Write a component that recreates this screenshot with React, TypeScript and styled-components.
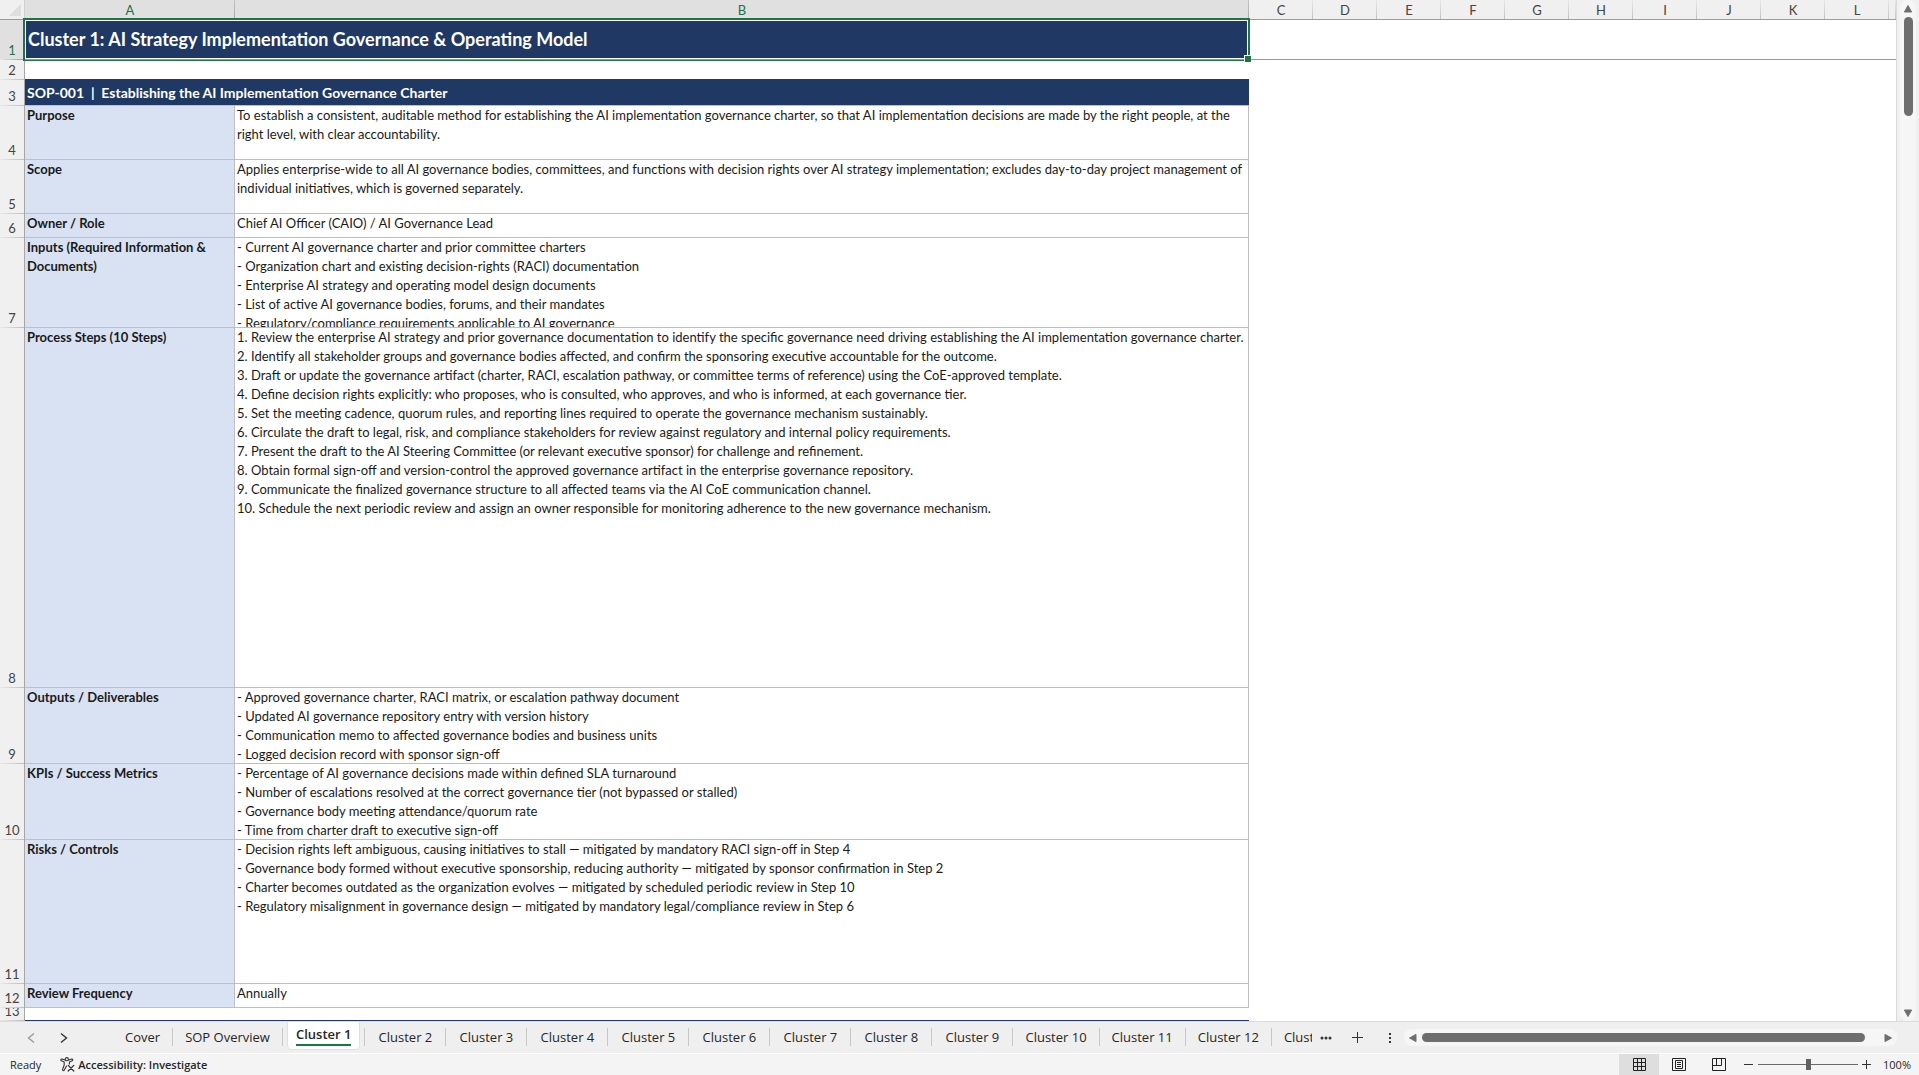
import React, { useState } from 'react';
import styled, { createGlobalStyle } from 'styled-components';

const GREEN = '#217346';
const NAVY = '#203864';
const GRID = '#bfbfbf';
const CHROME = '#f0f0f0';
const INK = '#262626';

const GlobalStyle = createGlobalStyle`
  * { box-sizing: border-box; }
  body { margin: 0; background: ${CHROME}; }
  button { border: 0; padding: 0; margin: 0; background: none; color: inherit; font: inherit; }
`;

const Workbook = styled.div`
  display: flex;
  flex-direction: column;
  height: 100vh;
  overflow: hidden;
  background: ${CHROME};
  color: ${INK};
  font-family: "Open Sans", "Noto Sans", sans-serif;
`;

const SheetArea = styled.main`
  display: flex;
  flex: 1;
  min-height: 0;
`;

const SheetView = styled.div`
  flex: 1;
  min-width: 0;
  overflow: hidden;
  background: #fff;
  border-right: 1px solid #dadada;
`;

const Sheet = styled.table`
  width: 100%;
  table-layout: fixed;
  border-collapse: separate;
  border-spacing: 0;
  font: 13px/19px Lato, Roboto, sans-serif;
  color: #1a1a1a;

  th, td { padding: 0; text-align: left; vertical-align: top; font-weight: 400; }
`;

const Col = styled.col<{ $w?: number }>`
  width: ${p => (p.$w ? `${p.$w}px` : 'auto')};
`;

const Corner = styled.td`
  height: 20px;
  background: ${CHROME};
  border-right: 1px solid #d0d0d0;
  border-bottom: 1px solid #9c9c9c;
`;

const CornerMark = styled.svg`
  display: block;
  margin: 4px 0 0 9px;
`;

const ColHeader = styled.th<{ $selected?: boolean }>`
  && {
    height: 20px;
    padding-top: 2px;
    line-height: 17px;
    text-align: center;
    border-bottom: 1px solid #9c9c9c;
    color: ${p => (p.$selected ? GREEN : '#444')};
    background: ${p => `linear-gradient(${p.$selected ? '#c4c4c4, #a8a8a8' : '#e8e8e8, #c4c4c4'}) right / 1px 100% no-repeat,
      ${p.$selected ? '#e0e0e0' : CHROME}`};
  }
`;

const RowHeader = styled.th<{ $selected?: boolean }>`
  border-right: 1px solid #a6a6a6;
  color: ${p => (p.$selected ? GREEN : '#444')};
  background: ${p => `linear-gradient(to right, #e8e8e8, ${p.$selected ? '#999' : '#bdbdbd'}) bottom / 100% 1px no-repeat,
    ${p.$selected ? '#e0e0e0' : CHROME}`};
`;

const RowNumber = styled.div<{ $h: number }>`
  display: flex;
  align-items: flex-end;
  justify-content: center;
  height: ${p => p.$h}px;
  padding-bottom: 2px;
  line-height: 16px;
  overflow: hidden;
`;

const Cell = styled.td<{ $line?: string; $edge?: boolean }>`
  border-bottom: 1px solid ${p => p.$line ?? 'transparent'};
  border-right: ${p => (p.$edge ? `1px solid ${GRID}` : '0')};
`;

const LabelCell = styled.th`
  && {
    background: #d9e2f3;
    border-right: 1px solid ${GRID};
    border-bottom: 1px solid ${GRID};
    font-weight: 700;
  }
`;

const CellText = styled.div<{ $h: number }>`
  height: ${p => p.$h - 1}px;
  padding-left: 2px;
  overflow: hidden;
  white-space: pre-line;
`;

const TitleCell = styled.td`
  position: relative;
  border-bottom: 1px solid #999;
`;

const Title = styled.div`
  display: flex;
  align-items: center;
  height: 39px;
  margin-right: 1px;
  padding-left: 2px;
  border: 1px solid #fff;
  background: ${NAVY};
  color: #fff;
  font-weight: 700;
  font-size: 18px;
`;

const Selection = styled.div`
  position: absolute;
  inset: -2px -1px -2px -2px;
  border: 2px solid ${GREEN};
  border-bottom-width: 1px;
  pointer-events: none;

  &::after {
    content: '';
    position: absolute;
    right: -3px;
    bottom: -2px;
    width: 6px;
    height: 6px;
    background: ${GREEN};
    border: solid #fff;
    border-width: 1px 0 0 1px;
  }
`;

const SectionCell = styled.td`
  background: ${NAVY};
  border-bottom: 1px solid ${GRID};
`;

const Section = styled.div`
  display: flex;
  align-items: center;
  height: 25px;
  padding-left: 2px;
  color: #fff;
  font-weight: 700;
  font-size: 14px;
  white-space: pre;
`;

const ScrollButton = styled.button`
  display: flex;
  align-items: center;
  justify-content: center;
  flex: none;
`;

const VScroll = styled.div`
  display: flex;
  flex-direction: column;
  align-items: center;
  width: 16px;
  margin: 0 3px;
  border-radius: 8px;
  background: #f6f6f6;

  ${ScrollButton} { width: 16px; height: 17px; }
`;

const VTrack = styled.div`
  flex: 1;
  width: 9px;
`;

const VThumb = styled.div`
  height: 10%;
  border-radius: 5px;
  background: #6e6e6e;
`;

const TabBar = styled.nav`
  display: flex;
  align-items: center;
  height: 32px;
  flex: none;
  padding-right: 22px;
  border-top: 1px solid #dcdcdc;
  background: #efefef;
  font-size: 13px;
`;

const TabNav = styled.div`
  display: flex;
  flex: none;
  width: 113px;
  padding-left: 14px;
`;

const NavButton = styled.button<{ $dim?: boolean }>`
  display: flex;
  justify-content: center;
  width: 33px;
  color: ${p => (p.$dim ? '#9a9a9a' : '#333')};
`;

const TabList = styled.div`
  display: flex;
  align-self: stretch;
  flex: none;
`;

const Tab = styled.button<{ $active: boolean; $clipped?: boolean }>`
  position: relative;
  display: flex;
  align-items: ${p => (p.$active ? 'flex-start' : 'center')};
  justify-content: ${p => (p.$clipped ? 'flex-start' : 'center')};
  min-width: ${p => (p.$clipped ? '0' : '81px')};
  width: ${p => (p.$clipped ? '40px' : 'auto')};
  padding-left: 12px;
  padding-right: ${p => (p.$clipped ? '0' : '13px')};
  padding-bottom: ${p => (p.$active ? '0' : '2px')};
  overflow: hidden;
  white-space: nowrap;
  font-weight: ${p => (p.$active ? 600 : 400)};

  &:first-child { min-width: 0; }

  &::after {
    content: '';
    position: absolute;
    right: 0;
    top: 6px;
    height: 18px;
    width: ${p => (p.$clipped ? '0' : '1px')};
    background: #c8c8c8;
  }
`;

const ActiveFace = styled.span`
  display: flex;
  flex: none;
  height: 28px;
  margin: 0 -8px;
  padding: 2px 8px 0;
  border: solid #e0e0e0;
  border-width: 0 1px 1px;
  border-radius: 0 0 5px 5px;
  background: #fff;
`;

const ActiveLabel = styled.span`
  height: 22px;
  line-height: 20px;
  border-bottom: 2px solid #107c41;
`;

const TabTools = styled.div`
  display: flex;
  align-items: center;
  flex: none;
  gap: 5px;
  width: 92px;
`;

const ToolButton = styled.button`
  display: flex;
  justify-content: center;
  width: 28px;
`;

const HScroll = styled.div`
  display: flex;
  align-items: center;
  flex: 1;
  min-width: 0;
  height: 17px;
  border-radius: 8px;
  background: #f6f6f6;

  ${ScrollButton} { width: 18px; height: 17px; }
`;

const HTrack = styled.div`
  flex: 1;
`;

const HThumb = styled.div`
  width: 97%;
  height: 9px;
  border-radius: 5px;
  background: #6e6e6e;
`;

const StatusBar = styled.footer`
  display: flex;
  align-items: center;
  flex: none;
  height: 22px;
  border-top: 1px solid #fff;
  background: #f4f4f4;
  padding: 0 8px 0 10px;
  font-size: 11px;
`;

const AccessButton = styled.button`
  display: flex;
  align-items: center;
  gap: 3px;
  margin: 0 auto 0 19px;
  font-weight: 600;
`;

const ViewButton = styled.button<{ $on?: boolean }>`
  display: flex;
  align-items: center;
  justify-content: center;
  width: 40px;
  height: 21px;
  background: ${p => (p.$on ? '#dedede' : 'transparent')};
`;

const ZoomGroup = styled.div`
  display: flex;
  align-items: center;
  gap: 4px;
  margin-left: 5px;
`;

const ZoomButton = styled.button`
  display: flex;
  width: 10px;
`;

const ZoomSlider = styled.input`
  appearance: none;
  width: 100px;
  height: 11px;
  margin: 0;
  background: linear-gradient(#6a6a6a, #6a6a6a) center / 100% 1px no-repeat;

  &::-webkit-slider-thumb {
    appearance: none;
    width: 5px;
    height: 11px;
    background: #606060;
  }
`;

const ZoomValue = styled.button`
  width: 35px;
  text-align: right;
`;

const Arrow = ({ dir }: { dir: 'up' | 'down' | 'left' | 'right' }) => {
  const d = {
    up: 'M5 1.5 8.6 8H1.4z',
    down: 'M5 8.5 1.4 2h7.2z',
    left: 'M1.5 5 8 1.4v7.2z',
    right: 'M8.5 5 2 8.6V1.4z',
  }[dir];
  return (
    <svg width="10" height="10" viewBox="0 0 10 10" aria-hidden="true">
      <path d={d} fill="#6e6e6e" stroke="#6e6e6e" strokeLinejoin="round" />
    </svg>
  );
};

const Chevron = ({ right }: { right?: boolean }) => (
  <svg width="10" height="12" viewBox="0 0 10 12" fill="none" stroke="currentColor" strokeWidth="1.4" aria-hidden="true">
    <path d={right ? 'M2 1.5 7.5 6 2 10.5' : 'M8 1.5 2.5 6 8 10.5'} />
  </svg>
);

const AccessibilityIcon = () => (
  <svg width="15" height="15" viewBox="0 0 15 15" fill="none" stroke="#333" strokeWidth="1.1" strokeLinejoin="round" strokeLinecap="round" aria-hidden="true">
    <circle cx="6.8" cy="2.2" r="1.6" />
    <path d="M5 3.1 2 2.1C.8 1.8.3 3.3 1.4 3.8L4.2 5v3L2.6 12.4c-.3 1.2 1.2 1.7 1.7.6L6.5 9" />
    <path d="M8.6 3.1 11.6 2.1c1.2-.3 1.7 1.2.6 1.7L9.4 5v2" />
    <path d="M8.2 8.4 13.8 14M13.8 8.4 8.2 14" strokeWidth="1.3" />
  </svg>
);

const GridIcon = () => (
  <svg width="13" height="13" viewBox="0 0 13 13" fill="none" stroke="#222" aria-hidden="true">
    <path d="M.5.5h12v12H.5zM4.5.5v12M8.5.5v12M.5 4.5h12M.5 8.5h12" />
  </svg>
);

const PageIcon = () => (
  <svg width="14" height="13" viewBox="0 0 14 13" fill="none" stroke="#222" aria-hidden="true">
    <path d="M.5.5h13v12H.5zM3.5 2.5h7v8h-7zM5 4.5h4M5 6.5h4M5 8.5h4" />
  </svg>
);

const BreakIcon = () => (
  <svg width="14" height="13" viewBox="0 0 14 13" fill="none" stroke="#222" aria-hidden="true">
    <path d="M.5.5h13v12H.5zM.5 7.5h9v-7M4.5.5v7" />
  </svg>
);

const LETTERS = ['C', 'D', 'E', 'F', 'G', 'H', 'I', 'J', 'K', 'L'];
const COLUMN_WIDTHS = [25, 210, 1014, ...LETTERS.map(() => 64)];

const ROWS: { n: number; h: number; label: string; text: string }[] = [
  { n: 4, h: 54, label: 'Purpose', text: 'To establish a consistent, auditable method for establishing the AI implementation governance charter, so that AI implementation decisions are made by the right people, at the right level, with clear accountability.' },
  { n: 5, h: 54, label: 'Scope', text: 'Applies enterprise-wide to all AI governance bodies, committees, and functions with decision rights over AI strategy implementation; excludes day-to-day project management of individual initiatives, which is governed separately.' },
  { n: 6, h: 24, label: 'Owner / Role', text: 'Chief AI Officer (CAIO) / AI Governance Lead' },
  { n: 7, h: 90, label: 'Inputs (Required Information & Documents)', text: `- Current AI governance charter and prior committee charters
- Organization chart and existing decision-rights (RACI) documentation
- Enterprise AI strategy and operating model design documents
- List of active AI governance bodies, forums, and their mandates
- Regulatory/compliance requirements applicable to AI governance` },
  { n: 8, h: 360, label: 'Process Steps (10 Steps)', text: `1. Review the enterprise AI strategy and prior governance documentation to identify the specific governance need driving establishing the AI implementation governance charter.
2. Identify all stakeholder groups and governance bodies affected, and confirm the sponsoring executive accountable for the outcome.
3. Draft or update the governance artifact (charter, RACI, escalation pathway, or committee terms of reference) using the CoE-approved template.
4. Define decision rights explicitly: who proposes, who is consulted, who approves, and who is informed, at each governance tier.
5. Set the meeting cadence, quorum rules, and reporting lines required to operate the governance mechanism sustainably.
6. Circulate the draft to legal, risk, and compliance stakeholders for review against regulatory and internal policy requirements.
7. Present the draft to the AI Steering Committee (or relevant executive sponsor) for challenge and refinement.
8. Obtain formal sign-off and version-control the approved governance artifact in the enterprise governance repository.
9. Communicate the finalized governance structure to all affected teams via the AI CoE communication channel.
10. Schedule the next periodic review and assign an owner responsible for monitoring adherence to the new governance mechanism.` },
  { n: 9, h: 76, label: 'Outputs / Deliverables', text: `- Approved governance charter, RACI matrix, or escalation pathway document
- Updated AI governance repository entry with version history
- Communication memo to affected governance bodies and business units
- Logged decision record with sponsor sign-off` },
  { n: 10, h: 76, label: 'KPIs / Success Metrics', text: `- Percentage of AI governance decisions made within defined SLA turnaround
- Number of escalations resolved at the correct governance tier (not bypassed or stalled)
- Governance body meeting attendance/quorum rate
- Time from charter draft to executive sign-off` },
  { n: 11, h: 144, label: 'Risks / Controls', text: `- Decision rights left ambiguous, causing initiatives to stall — mitigated by mandatory RACI sign-off in Step 4
- Governance body formed without executive sponsorship, reducing authority — mitigated by sponsor confirmation in Step 2
- Charter becomes outdated as the organization evolves — mitigated by scheduled periodic review in Step 10
- Regulatory misalignment in governance design — mitigated by mandatory legal/compliance review in Step 6` },
  { n: 12, h: 24, label: 'Review Frequency', text: 'Annually' },
];

const TABS = ['Cover', 'SOP Overview', ...Array.from({ length: 13 }, (_, i) => `Cluster ${i + 1}`)];

const NumberCell = ({ n, h, selected }: { n: number; h: number; selected?: boolean }) => (
  <RowHeader scope="row" $selected={selected}>
    <RowNumber $h={h}>{n}</RowNumber>
  </RowHeader>
);

export default function App() {
  const [active, setActive] = useState('Cluster 1');
  const [zoom, setZoom] = useState(50);
  const rest = LETTERS.length + 1;

  return (
    <Workbook>
      <GlobalStyle />
      <SheetArea>
        <SheetView>
          <Sheet>
            <colgroup>
              {COLUMN_WIDTHS.map((w, i) => <Col key={i} $w={w} />)}
              <Col />
            </colgroup>
            <thead>
              <tr>
                <Corner>
                  <CornerMark width="12" height="12" viewBox="0 0 12 12" aria-hidden="true">
                    <path d="M12 0v12H0z" fill="#dedede" />
                  </CornerMark>
                </Corner>
                <ColHeader scope="col" $selected>A</ColHeader>
                <ColHeader scope="col" $selected>B</ColHeader>
                {LETTERS.map(l => <ColHeader key={l} scope="col">{l}</ColHeader>)}
                <ColHeader as="td" />
              </tr>
            </thead>
            <tbody>
              <tr>
                <NumberCell n={1} h={40} selected />
                <TitleCell colSpan={2}>
                  <Title>Cluster 1: AI Strategy Implementation Governance &amp; Operating Model</Title>
                  <Selection />
                </TitleCell>
                <Cell colSpan={rest} $line="#999" />
              </tr>
              <tr>
                <NumberCell n={2} h={20} />
                <Cell colSpan={2} $line={NAVY} />
                <Cell colSpan={rest} />
              </tr>
              <tr>
                <NumberCell n={3} h={26} />
                <SectionCell colSpan={2}>
                  <Section>{'SOP-001  |  Establishing the AI Implementation Governance Charter'}</Section>
                </SectionCell>
                <Cell colSpan={rest} />
              </tr>
              {ROWS.map(r => (
                <tr key={r.n}>
                  <NumberCell n={r.n} h={r.h} />
                  <LabelCell scope="row"><CellText $h={r.h}>{r.label}</CellText></LabelCell>
                  <Cell $line={GRID} $edge><CellText $h={r.h}>{r.text}</CellText></Cell>
                  <Cell colSpan={rest} />
                </tr>
              ))}
              <tr>
                <NumberCell n={13} h={13} />
                <Cell colSpan={2} $line={NAVY} />
                <Cell colSpan={rest} />
              </tr>
            </tbody>
          </Sheet>
        </SheetView>
        <VScroll>
          <ScrollButton aria-label="Scroll up"><Arrow dir="up" /></ScrollButton>
          <VTrack><VThumb /></VTrack>
          <ScrollButton aria-label="Scroll down"><Arrow dir="down" /></ScrollButton>
        </VScroll>
      </SheetArea>

      <TabBar aria-label="Sheets">
        <TabNav>
          <NavButton $dim aria-label="Previous sheets"><Chevron /></NavButton>
          <NavButton aria-label="Next sheets"><Chevron right /></NavButton>
        </TabNav>
        <TabList role="tablist">
          {TABS.map((t, i) => (
            <Tab
              key={t}
              role="tab"
              aria-selected={t === active}
              $active={t === active}
              $clipped={i === TABS.length - 1}
              onClick={() => setActive(t)}
            >
              {t === active ? <ActiveFace><ActiveLabel>{t}</ActiveLabel></ActiveFace> : t}
            </Tab>
          ))}
        </TabList>
        <TabTools>
          <ToolButton aria-label="More sheets">
            <svg width="12" height="4" viewBox="0 0 12 4" fill="#333" aria-hidden="true">
              <circle cx="2" cy="2" r="1.5" /><circle cx="6" cy="2" r="1.5" /><circle cx="10" cy="2" r="1.5" />
            </svg>
          </ToolButton>
          <ToolButton aria-label="New sheet">
            <svg width="11" height="11" viewBox="0 0 11 11" stroke="#333" aria-hidden="true"><path d="M5.5 0v11M0 5.5h11" /></svg>
          </ToolButton>
          <ToolButton aria-label="Resize tab area">
            <svg width="2" height="10" viewBox="0 0 2 10" fill="#333" aria-hidden="true"><path d="M0 0h2v2H0zM0 4h2v2H0zM0 8h2v2H0z" /></svg>
          </ToolButton>
        </TabTools>
        <HScroll>
          <ScrollButton aria-label="Scroll left"><Arrow dir="left" /></ScrollButton>
          <HTrack><HThumb /></HTrack>
          <ScrollButton aria-label="Scroll right"><Arrow dir="right" /></ScrollButton>
        </HScroll>
      </TabBar>

      <StatusBar>
        <span>Ready</span>
        <AccessButton><AccessibilityIcon />Accessibility: Investigate</AccessButton>
        <ViewButton $on aria-label="Normal view"><GridIcon /></ViewButton>
        <ViewButton aria-label="Page layout view"><PageIcon /></ViewButton>
        <ViewButton aria-label="Page break preview"><BreakIcon /></ViewButton>
        <ZoomGroup>
          <ZoomButton aria-label="Zoom out">
            <svg width="9" height="9" viewBox="0 0 9 9" stroke="#333" aria-hidden="true"><path d="M0 4.5h9" /></svg>
          </ZoomButton>
          <ZoomSlider
            type="range"
            min={0}
            max={100}
            value={zoom}
            aria-label="Zoom level"
            onChange={e => setZoom(Number(e.target.value))}
          />
          <ZoomButton aria-label="Zoom in">
            <svg width="9" height="9" viewBox="0 0 9 9" stroke="#333" aria-hidden="true"><path d="M0 4.5h9M4.5 0v9" /></svg>
          </ZoomButton>
          <ZoomValue>100%</ZoomValue>
        </ZoomGroup>
      </StatusBar>
    </Workbook>
  );
}
